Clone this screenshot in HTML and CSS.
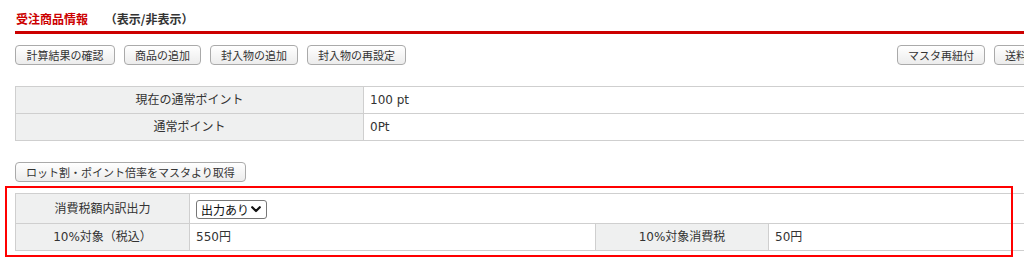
FILE: index.html
```html
<!DOCTYPE html>
<html>
<head>
    <title>受注商品情報</title>
    <link rel="stylesheet" href="styles.css">
</head>
<body>
    <div class="page">
        <div class="content">
            <h2 class="section-title">
                <span class="section-name">受注商品情報</span>
                <a class="toggle-link">（表示/非表示）</a>
            </h2>

            <div class="toolbar">
                <div class="toolbar-group">
                    <button class="btn btn-wide">計算結果の確認</button>
                    <button class="btn">商品の追加</button>
                    <button class="btn">封入物の追加</button>
                    <button class="btn">封入物の再設定</button>
                </div>
                <div class="toolbar-group">
                    <button class="btn">マスタ再紐付</button>
                    <button class="btn">送料再計算</button>
                </div>
            </div>

            <table class="info-table point-table">
                <tr>
                    <th class="point-label">現在の通常ポイント</th>
                    <td>100 pt</td>
                </tr>
                <tr>
                    <th>通常ポイント</th>
                    <td>0Pt</td>
                </tr>
            </table>

            <div class="lot-row">
                <button class="btn">ロット割・ポイント倍率をマスタより取得</button>
            </div>

            <div class="tax-section">
                <table class="info-table tax-table">
                    <colgroup>
                        <col class="col-label">
                        <col class="col-value">
                        <col class="col-label2">
                        <col>
                    </colgroup>
                    <tr class="select-row">
                        <th>消費税額内訳出力</th>
                        <td colspan="3">
                            <span class="select-wrap">
                                <select class="select">
                                    <option>出力あり</option>
                                    <option>出力なし</option>
                                </select>
                                <svg class="chevron" width="10" height="7" viewBox="0 0 10 7">
                                    <polyline points="1.2,1.2 5,5 8.8,1.2" fill="none" stroke="#111" stroke-width="2.2" stroke-linecap="round" stroke-linejoin="round"/>
                                </svg>
                            </span>
                        </td>
                    </tr>
                    <tr>
                        <th>10%対象（税込）</th>
                        <td>550円</td>
                        <th>10%対象消費税</th>
                        <td>50円</td>
                    </tr>
                </table>
                <div class="highlight"></div>
            </div>
        </div>
    </div>
</body>
</html>
```

FILE: styles.css
```css
html, body {
    margin: 0;
    padding: 0;
    background: #fff;
}
body {
    font-family: "DejaVu Sans", "Noto Sans CJK JP", sans-serif;
    font-size: 12px;
    color: #333;
}
.page {
    overflow: hidden;
    height: 263px;
}
.content {
    width: 1056px;
    margin-left: 15px;
}

/* title */
.section-title {
    margin: 0;
    padding: 11px 0 4px 1px;
    line-height: 16px;
    font-size: 12px;
    font-weight: bold;
    font-family: "Noto Sans CJK JP", sans-serif;
    border-bottom: 3px solid #cc0000;
}
.section-name {
    color: #cc0000;
}
.toggle-link {
    color: #333;
    margin-left: 14px;
    cursor: pointer;
}

/* buttons */
.toolbar {
    display: flex;
    justify-content: space-between;
    margin-top: 11px;
}
.toolbar-group {
    display: flex;
    gap: 9px;
}
.btn {
    height: 20px;
    padding: 0 10px;
    font-family: "Noto Sans CJK JP", sans-serif;
    font-size: 11px;
    line-height: 18px;
    color: #333;
    background: linear-gradient(#ffffff, #ececec);
    border: 1px solid #aaa;
    border-radius: 4px;
    cursor: pointer;
}
.btn-wide {
    min-width: 100px;
}

/* tables */
.info-table {
    width: 1056px;
    border-collapse: collapse;
    table-layout: fixed;
}
.info-table th, .info-table td {
    border: 1px solid #cfcfcf;
    padding: 6px 6px;
    line-height: 14px;
    font-size: 12px;
    text-align: left;
}
.info-table th {
    background: #eff0f0;
    font-weight: normal;
    text-align: center;
}
.point-table {
    margin-top: 21px;
}
.point-label {
    width: 335px;
}

.lot-row {
    margin-top: 21px;
}

.tax-section {
    position: relative;
    margin-top: 11px;
}
.col-label {
    width: 174px;
}
.col-value {
    width: 406px;
}
.col-label2 {
    width: 173px;
}
.tax-table .select-row th, .tax-table .select-row td {
    padding-top: 5px;
    padding-bottom: 4px;
    line-height: 20px;
}

/* select box */
.select-wrap {
    position: relative;
    display: inline-block;
    vertical-align: middle;
}
.select {
    appearance: none;
    -webkit-appearance: none;
    display: block;
    width: 71px;
    height: 19px;
    padding: 0 0 0 4px;
    font-family: "Noto Sans CJK JP", sans-serif;
    font-size: 12px;
    color: #111;
    background: #fff;
    border: 1px solid #777;
    border-radius: 3px;
}
.chevron {
    position: absolute;
    right: 6px;
    top: 6px;
    pointer-events: none;
}

/* red annotation frame */
.highlight {
    position: absolute;
    left: -10px;
    top: -7px;
    width: 1008px;
    height: 71px;
    box-sizing: border-box;
    border: 2px solid #f00;
    pointer-events: none;
}
```
